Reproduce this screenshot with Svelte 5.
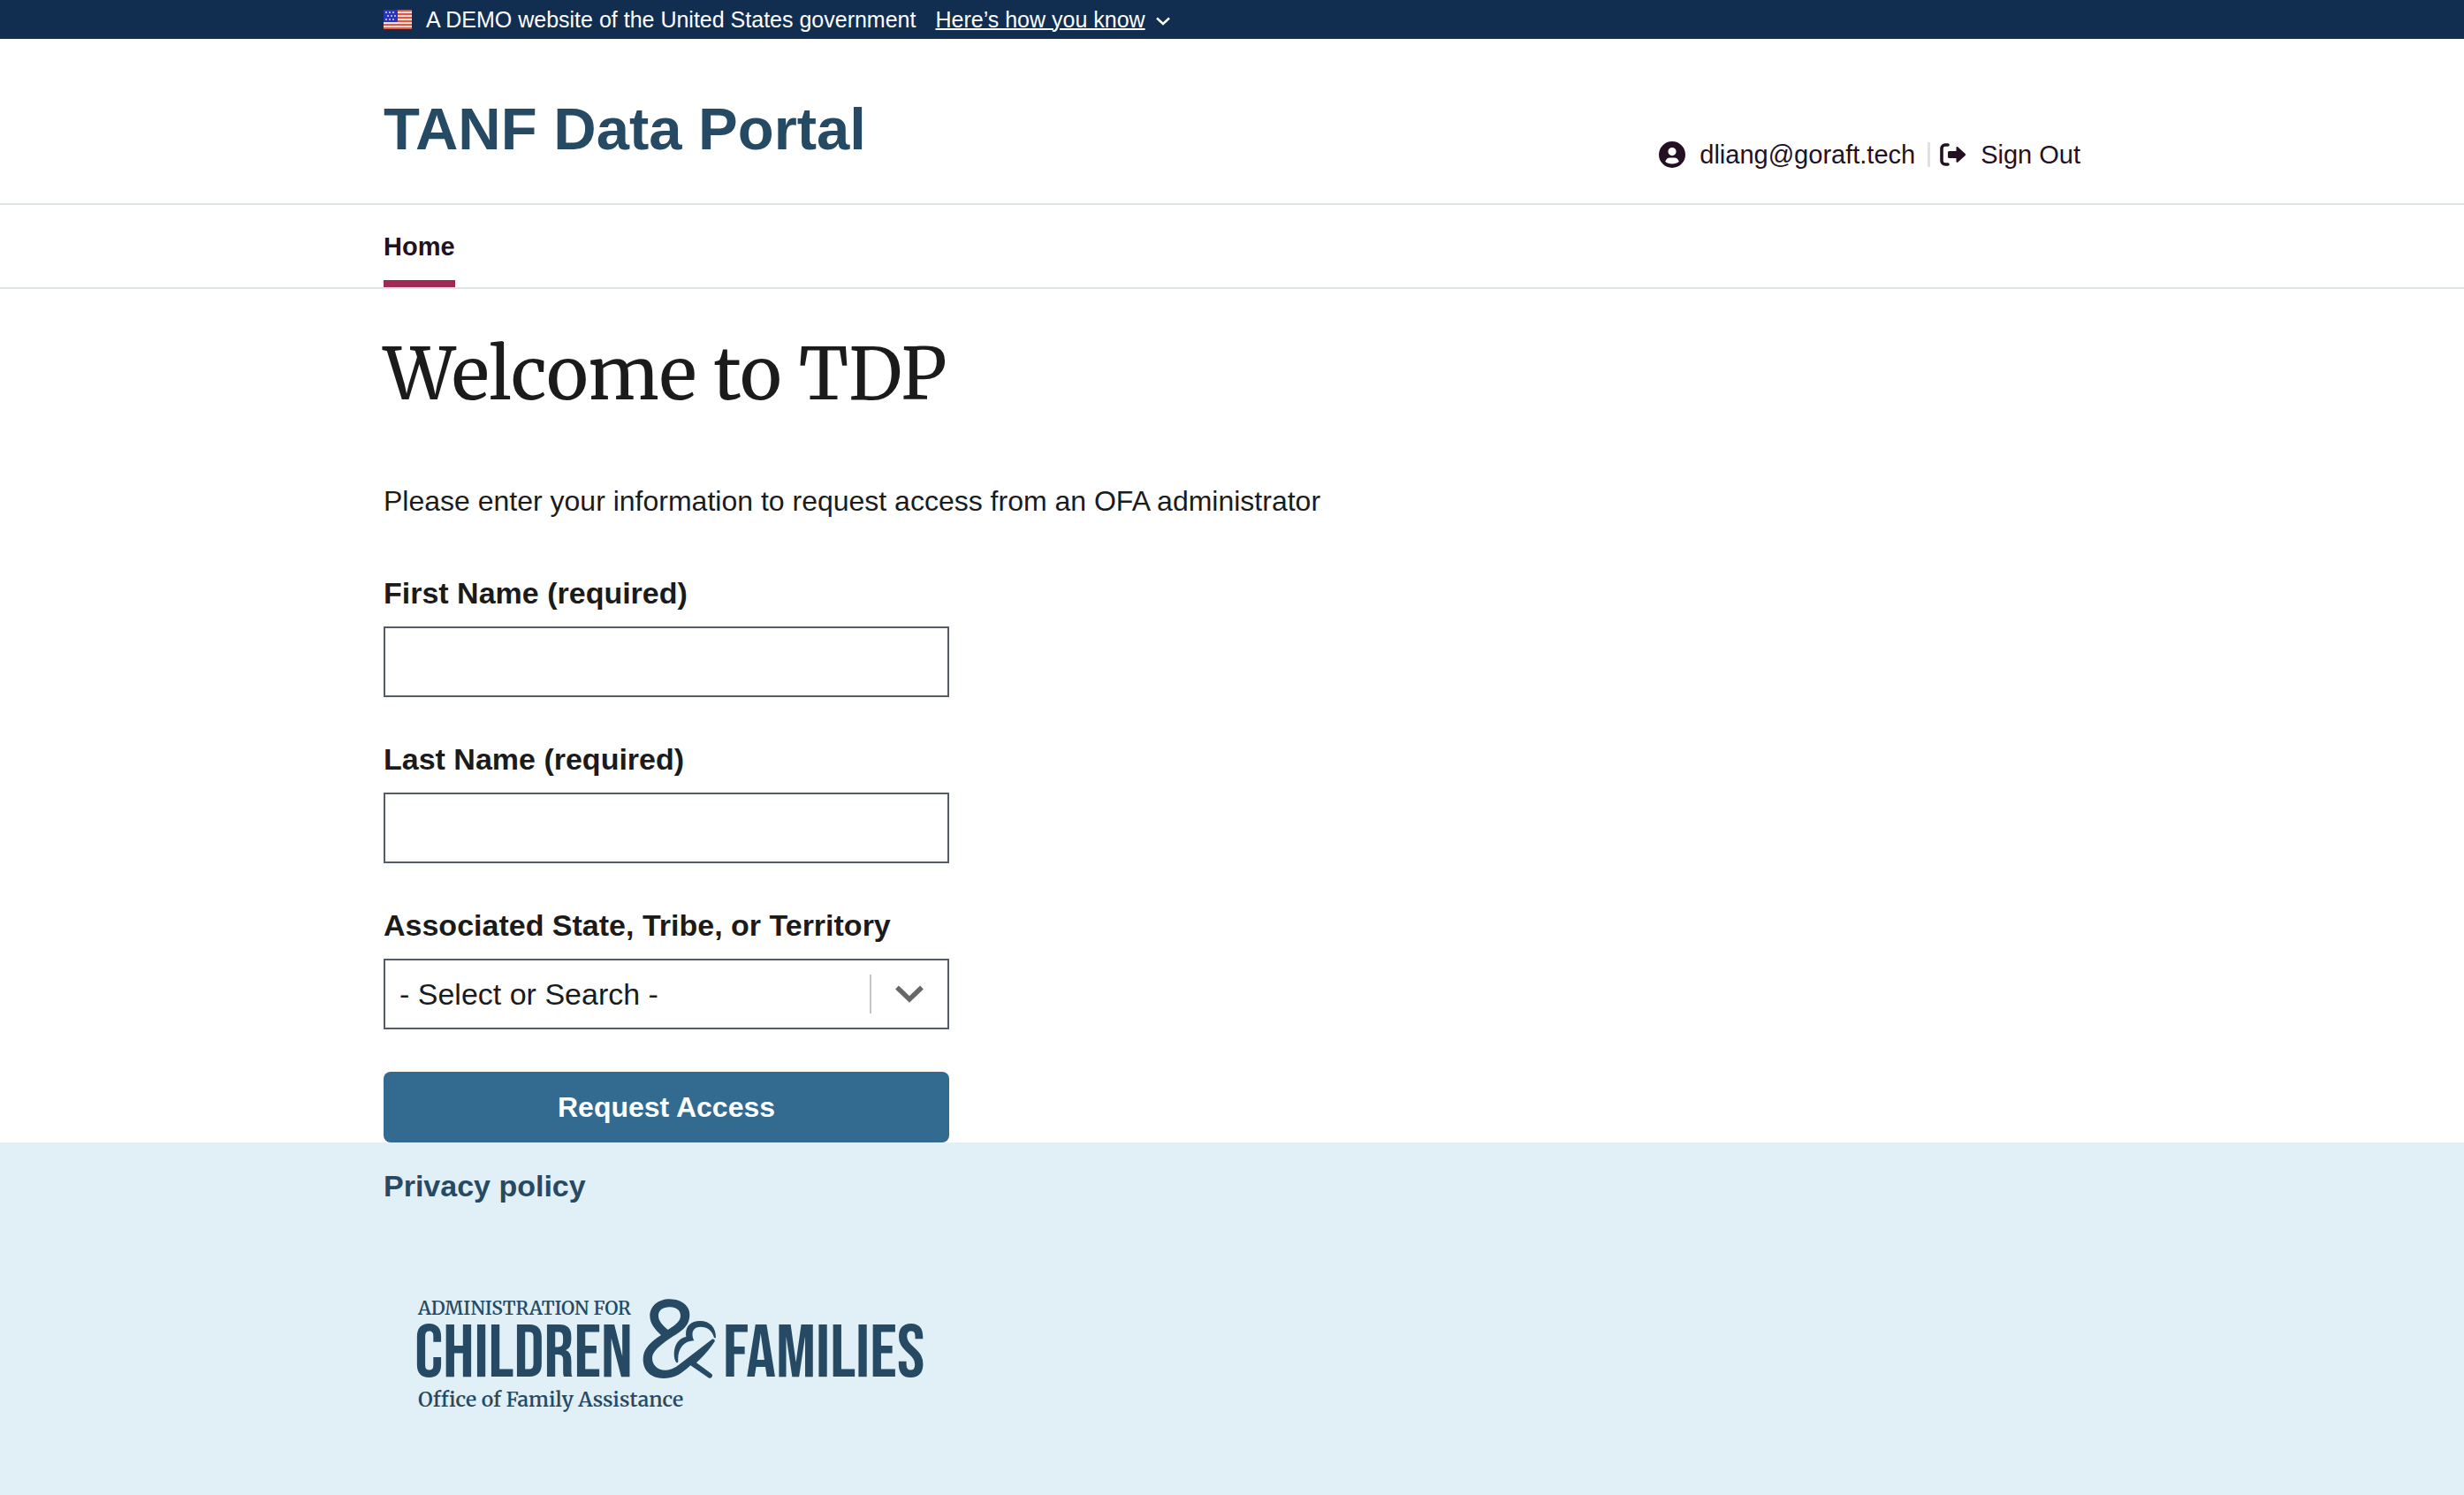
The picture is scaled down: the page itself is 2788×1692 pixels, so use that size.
<script>
  const stripes = [0, 1, 2, 3, 4, 5];
  const stars = [
    [3, 3], [7, 3], [11, 3],
    [5, 7], [9, 7], [13, 7],
    [3, 11], [7, 11], [11, 11]
  ];
  let firstName = $state('');
  let lastName = $state('');
  let stt = $state('');
</script>

<div class="page">
  <section class="banner" aria-label="Official government website">
    <div class="container banner-row">
      <svg class="flag" viewBox="0 0 32 22" aria-hidden="true">
        <rect width="32" height="22" fill="#fbe3dc" />
        {#each stripes as i}
          <rect y={i * 4} width="32" height="2" fill="#e8553c" />
        {/each}
        <rect width="16" height="14" fill="#2b35b8" />
        {#each stars as [x, y]}
          <rect x={x - 1} y={y - 1} width="2" height="2" fill="#a9b0ec" />
        {/each}
      </svg>
      <span>A DEMO website of the United States government</span>
      <button type="button" class="know">
        <span class="know-text">Here’s how you know</span>
        <svg class="know-icon" viewBox="0 0 16 10" aria-hidden="true">
          <path d="M1 1.5l7 6.5 7-6.5" fill="none" stroke="#fff" stroke-width="2.4" />
        </svg>
      </button>
    </div>
  </section>

  <header>
    <div class="container header-row">
      <div class="title">TANF Data Portal</div>
      <div class="account">
        <a class="account-link" href="#profile">
          <svg class="account-icon" viewBox="0 0 30 30" aria-hidden="true">
            <path fill="currentColor" fill-rule="evenodd" d="M15 0a15 15 0 1 0 0 30 15 15 0 0 0 0-30zm0 7a4.6 4.6 0 1 1 0 9.200 4.600 4.600 0 0 1 0-9.200zM15 25.500c-3.300 0-6-1-7.800-2.800 1-2.700 2.900-4.200 5.300-4.200h5c2.400 0 4.300 1.500 5.300 4.200-1.800 1.800-4.500 2.800-7.800 2.800z" />
          </svg>
          dliang@goraft.tech
        </a>
        <span class="divider"></span>
        <a class="account-link" href="#signout">
          <svg class="account-icon" viewBox="0 0 30 30" aria-hidden="true">
            <path fill="none" stroke="currentColor" stroke-width="3.600" stroke-linecap="round" stroke-linejoin="round" d="M9 4H6a4 4 0 0 0-4 4v14a4 4 0 0 0 4 4h3" />
            <path fill="currentColor" d="M10.500 11h8V7.200c0-1 1.200-1.500 1.900-.8l8.300 7.700c.5.500.5 1.300 0 1.800l-8.300 7.700c-.7.700-1.900.2-1.900-.8V19h-8c-.8 0-1.500-.7-1.500-1.500v-5c0-.8.7-1.500 1.500-1.500z" />
          </svg>
          Sign Out
        </a>
      </div>
    </div>
    <nav aria-label="Primary">
      <div class="container">
        <a class="nav-link" href="#home" aria-current="page">Home</a>
      </div>
    </nav>
  </header>

  <main class="container">
    <h1>Welcome to TDP</h1>
    <p>Please enter your information to request access from an OFA administrator</p>
    <form onsubmit={(e) => e.preventDefault()}>
      <div class="field">
        <label for="firstName">First Name (required)</label>
        <input id="firstName" class="control" type="text" bind:value={firstName} />
      </div>
      <div class="field">
        <label for="lastName">Last Name (required)</label>
        <input id="lastName" class="control" type="text" bind:value={lastName} />
      </div>
      <div class="field">
        <label for="stt">Associated State, Tribe, or Territory</label>
        <div class="combo">
          <select id="stt" class="control combo-select" bind:value={stt}>
            <option value="">- Select or Search -</option>
            <option value="alabama">Alabama</option>
            <option value="alaska">Alaska</option>
          </select>
          <div class="combo-mark">
            <svg viewBox="0 0 32 20" aria-hidden="true">
              <path d="M2 2.500l14 13.500 14-13.500" fill="none" stroke="#676767" stroke-width="5.500" />
            </svg>
          </div>
        </div>
      </div>
      <button type="submit" class="submit">Request Access</button>
    </form>
  </main>

  <footer>
    <div class="container">
      <a class="privacy" href="#privacy">Privacy policy</a>
      <svg class="logo" viewBox="434 1440 640 180" role="img" aria-label="Administration for Children and Families, Office of Family Assistance">
        <g fill="#264a64">
          <text class="logo-serif" x="473" y="1488" font-size="21">ADMINISTRATION FOR</text>
          <text class="logo-sans" x="469" y="1558" font-size="84">CHILDREN</text>
          <text class="logo-sans" x="818" y="1558" font-size="84">FAMILIES</text>
          <text class="logo-serif" x="473" y="1592" font-size="23">Office of Family Assistance</text>
          <g transform="translate(720 1465) scale(.3333)">
            <path fill-rule="evenodd" d="M84 138C62 118 46 98 46 73C46 40 74 16 113 16C152 16 181 38 181 68C181 96 168 112 146 128C112 152 54 184 54 216C54 240 72 257 98 257C118 257 130 250 146 238L256 153C263 148 270 156 264 163C250 184 226 212 204 232L255 269C262 275 256 287 247 284L184 241C158 264 136 285 92 285C50 285 23 260 23 220C23 184 48 162 84 138ZM107 120C86 102 75 88 75 72C75 54 90 43 113 43C136 43 150 54 150 72C150 92 132 104 107 120Z" />
            <path d="M136 231C127 222 126 196 132 178C138 160 150 148 169 144C164 112 182 90 216 90C250 90 270 112 270 147C268 149 266 148 264 146C258 124 242 110 218 110C194 110 183 130 196 157C164 158 138 182 142 228C141 232 139 233 136 231Z" />
          </g>
        </g>
      </svg>
    </div>
  </footer>
</div>

<style>
  :global(body) {
    margin: 0;
    background: #fff;
  }
  .page {
    display: flex;
    flex-direction: column;
    min-height: 100vh;
    font-family: 'Liberation Sans', Arial, sans-serif;
    font-size: 32px;
    line-height: 44px;
    color: #1b1b1b;
  }
  .container {
    box-sizing: border-box;
    width: 100%;
    max-width: 2048px;
    margin: 0 auto;
    padding: 0 64px;
  }
  a {
    color: inherit;
    text-decoration: none;
  }
  button,
  input,
  select {
    font: inherit;
    color: inherit;
    box-sizing: border-box;
    margin: 0;
  }
  .banner {
    background: #112e51;
    color: #fff;
    font-size: 25px;
  }
  .banner-row {
    display: flex;
    align-items: center;
  }
  .flag {
    width: 32px;
    height: 22px;
    margin-right: 16px;
  }
  .know {
    display: flex;
    align-items: center;
    gap: 12px;
    margin-left: 22px;
    padding: 0;
    border: 0;
    background: none;
    cursor: pointer;
  }
  .know-text {
    text-decoration: underline;
    text-decoration-thickness: 2px;
  }
  .know-icon {
    width: 16px;
    height: 10px;
    margin-top: 4px;
  }
  .header-row {
    display: flex;
    justify-content: space-between;
    align-items: flex-end;
    padding-top: 64px;
    padding-bottom: 33px;
  }
  .title {
    font-size: 67px;
    line-height: 76px;
    font-weight: 700;
    color: #264a64;
    padding-bottom: 13px;
  }
  .account {
    display: flex;
    align-items: center;
    font-size: 29px;
    color: #231123;
  }
  .account-link {
    display: flex;
    align-items: center;
    gap: 16px;
  }
  .account-icon {
    width: 30px;
    height: 30px;
  }
  .divider {
    width: 3px;
    height: 28px;
    margin: 0 11px 0 14px;
    background: #dfe1e2;
  }
  nav {
    border-top: 2px solid #dce4e4;
    border-bottom: 2px solid #dce4e4;
  }
  nav .container {
    display: flex;
  }
  .nav-link {
    padding: 25px 0 16px;
    border-bottom: 8px solid #a02854;
    font-size: 29px;
    font-weight: 700;
    color: #231123;
  }
  h1 {
    margin: 44px 0 0;
    font-family: Merriweather, 'Noto Serif', 'DejaVu Serif', serif;
    font-size: 81px;
    line-height: 104px;
    font-weight: 400;
  }
  p {
    margin: 70px 0 60px;
  }
  form {
    display: flex;
    flex-direction: column;
    gap: 48px;
    max-width: 640px;
  }
  .field {
    display: flex;
    flex-direction: column;
    gap: 16px;
  }
  label {
    font-size: 34px;
    font-weight: 700;
  }
  .control {
    width: 100%;
    height: 80px;
    padding: 0 16px;
    border: 2px solid #565c65;
    border-radius: 0;
    background: #fff;
    appearance: none;
  }
  .combo {
    position: relative;
    display: flex;
  }
  .combo-select {
    font-size: 34px;
  }
  .combo-mark {
    position: absolute;
    top: 18px;
    bottom: 18px;
    right: 2px;
    display: flex;
    align-items: center;
    padding: 0 27px;
    border-left: 2px solid #c2c4ca;
    pointer-events: none;
  }
  .combo-mark svg {
    width: 32px;
    height: 20px;
  }
  .submit {
    height: 80px;
    border: 0;
    border-radius: 8px;
    background: #336a90;
    color: #fff;
    font-weight: 700;
    cursor: pointer;
  }
  footer {
    flex: 1;
    background: #e1eff6;
  }
  footer .container {
    display: flex;
    flex-direction: column;
    align-items: flex-start;
    gap: 76px;
    padding-top: 27px;
    padding-bottom: 64px;
  }
  .privacy {
    font-size: 34px;
    font-weight: 700;
    color: #264a64;
  }
  .logo {
    width: 640px;
    height: 180px;
  }
  .logo-serif {
    font-family: Merriweather, 'Noto Serif', 'DejaVu Serif', serif;
    font-weight: 600;
  }
  .logo-sans {
    font-family: 'Bebas Neue', Oswald, 'Roboto Condensed', sans-serif;
    font-weight: 400;
  }
</style>
